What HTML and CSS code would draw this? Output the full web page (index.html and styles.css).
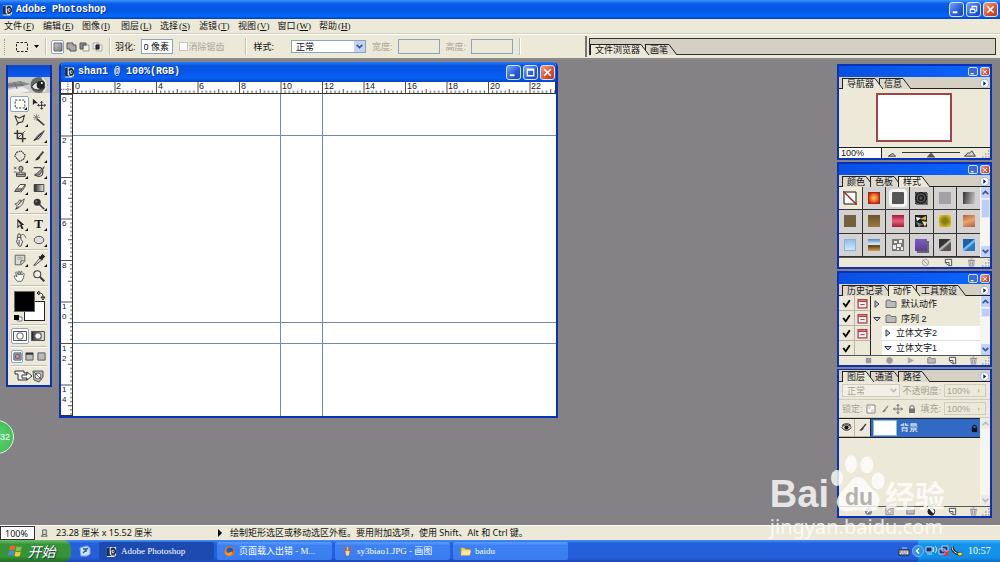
FILE: index.html
```html
<!DOCTYPE html>
<html lang="zh-CN">
<head>
<meta charset="utf-8">
<title>Adobe Photoshop</title>
<link rel="stylesheet" href="styles.css">
</head>
<body>
<svg class="defs" width="0" height="0" aria-hidden="true">
  <defs>
    <linearGradient id="gBlack" x1="0" x2="1"><stop offset="0" stop-color="#222"/><stop offset="1" stop-color="#eee"/></linearGradient>
    <linearGradient id="gGrey" x1="0" y1="0" x2="1" y2="1"><stop offset="0" stop-color="#ccc"/><stop offset="1" stop-color="#777"/></linearGradient>
    <pattern id="tickH" width="41.5" height="11" patternUnits="userSpaceOnUse"><path d="M.5 0V11M4.65 8.500V11M8.8 8.500V11M12.95 8.500V11M17.1 8.500V11M21.25 7V11M25.4 8.500V11M29.55 8.500V11M33.7 8.500V11M37.85 8.500V11" stroke="#222" stroke-width=".8"/></pattern>
    <pattern id="tickV" width="12" height="41.5" patternUnits="userSpaceOnUse"><path d="M0 .5H12M9 4.65H12M9 8.800H12M9 12.950H12M9 17.100H12M7 21.250H12M9 25.400H12M9 29.550H12M9 33.700H12M9 37.850H12" stroke="#222" stroke-width=".8"/></pattern>
  </defs>
  <symbol id="ps" viewBox="0 0 12 12"><path d="M1 1h10v9l-2 2H1z" fill="#dfe9f2"/><path d="M1 2l3-1v8l2 2H1z" fill="#16304f"/><path d="M5 3c3-3 6 0 6 3s-2 5-5 4z" fill="#1d2740"/><path d="M6 5c2-2 4 0 3 2s-3 1-3-2z" fill="#fff"/><circle cx="8" cy="6" r="1" fill="#247"/><path d="M7 9l3 2" stroke="#d44" stroke-width="1"/></symbol>
  <symbol id="min" viewBox="0 0 14 14"><path d="M3 10h5" stroke="#fff" stroke-width="2.200"/></symbol>
  <symbol id="max" viewBox="0 0 14 14"><path d="M3.500 3.500h7v7h-7zM3 4.500h8" fill="none" stroke="#fff" stroke-width="1.400"/></symbol>
  <symbol id="restore" viewBox="0 0 14 14"><path d="M5.500 6V3.500h5v5H9M5 4h6M3.500 6.500h5v4h-5zM3 7h6" fill="none" stroke="#fff" stroke-width="1.100"/></symbol>
  <symbol id="close" viewBox="0 0 14 14"><path d="M3.500 3.500l7 7m0-7l-7 7" stroke="#fff" stroke-width="1.800"/></symbol>
  <symbol id="slant" viewBox="0 0 9 11"><path d="M0 .5L8 11H0z" fill="currentColor"/><path d="M0 .5l8 10.500" fill="none" stroke="#222" stroke-width="1"/></symbol>
  <symbol id="play" viewBox="0 0 9 9"><circle cx="4.500" cy="4.500" r="4.200" fill="#f5f9ff" stroke="#8aa9e0" stroke-width=".8"/><path d="M3.300 2.200v4.600l2.900-2.300z" fill="#124"/></symbol>
  <symbol id="marquee" viewBox="0 0 16 16"><rect x="2.500" y="3.500" width="11" height="9" fill="none" stroke="#222" stroke-dasharray="2.500 1.500"/></symbol>
  <symbol id="trash" viewBox="0 0 10 10"><path d="M2 3h6l-.6 6H2.600zM1 2.500h8M4 1h2M4 4v4M6 4v4" fill="#ddd" stroke="#888" stroke-width=".9"/></symbol>
  <symbol id="page" viewBox="0 0 10 10"><path d="M1.500 1.500h7v7h-3l-4-3z" fill="#eee" stroke="#444"/><path d="M2 5h3.500v3" fill="#fff" stroke="#444"/></symbol>
  <symbol id="folder" viewBox="0 0 12 10"><path d="M1 8.500V2l1-1h3l1 1.500h5v6z" fill="#bbb" stroke="#666" stroke-width=".9"/></symbol>
  <symbol id="tick" viewBox="0 0 10 10"><path d="M2 4.500l2.300 3L8 2" fill="none" stroke="#000" stroke-width="1.700"/></symbol>
  <symbol id="dialog" viewBox="0 0 10 10"><rect x="1" y="1.500" width="8" height="7.500" fill="#fff" stroke="#b3404a" stroke-width="1.200"/><path d="M1 3h8" stroke="#b3404a" stroke-width="1.500"/><path d="M3 6h4" stroke="#b3404a"/></symbol>
  <symbol id="right" viewBox="0 0 8 8"><path d="M2 .8v6.400L6 4z" fill="#c7ceed" stroke="#223" stroke-width=".9"/></symbol>
  <symbol id="down" viewBox="0 0 8 8"><path d="M.8 2.500h6.400L4 6z" fill="#c7ceed" stroke="#223" stroke-width=".9"/></symbol>
  <symbol id="up-chev" viewBox="0 0 8 8"><path d="M1.500 5.500L4 3l2.500 2.500" fill="none" stroke="currentColor" stroke-width="1.500"/></symbol>
  <symbol id="down-chev" viewBox="0 0 8 8"><path d="M1.500 2.500L4 5l2.500-2.500" fill="none" stroke="currentColor" stroke-width="1.500"/></symbol>
  <symbol id="brush" viewBox="0 0 16 16"><path d="M13 3L8 9" stroke="#444" stroke-width="2"/><path d="M8.500 8l1 1.500C8 13 5 13 3 13c2-1 2-4 5.500-5z" fill="#333"/></symbol>
  <symbol id="grip" viewBox="0 0 9 9"><path d="M7 2h1.500M4 5h1.500M7 5h1.500M1 8h1.500M4 8h1.500M7 8h1.500" stroke="#aaa39a" stroke-width="1.500"/></symbol>
  <symbol id="lock" viewBox="0 0 10 10"><path d="M3 5V3.500a2 2 0 014 0V5" fill="none" stroke="currentColor" stroke-width="1.200"/><path d="M2 4.500h6V9H2z" fill="currentColor"/></symbol>
</svg>

<header class="titlebar">
  <svg class="app-icon"><use href="#ps"/></svg>
  <h1>Adobe Photoshop</h1>
  <div class="win-buttons">
    <button aria-label="最小化"><svg><use href="#min"/></svg></button>
    <button aria-label="还原"><svg><use href="#restore"/></svg></button>
    <button class="red" aria-label="关闭"><svg><use href="#close"/></svg></button>
  </div>
</header>

<nav class="menubar">
  <button>文件<i>(<u>F</u>)</i></button><button>编辑<i>(<u>E</u>)</i></button><button>图像<i>(<u>I</u>)</i></button><button>图层<i>(<u>L</u>)</i></button><button>选择<i>(<u>S</u>)</i></button><button>滤镜<i>(<u>T</u>)</i></button><button>视图<i>(<u>V</u>)</i></button><button>窗口<i>(<u>W</u>)</i></button><button>帮助<i>(<u>H</u>)</i></button>
</nav>

<section class="options">
  <span class="grip"></span>
  <button class="preset" aria-label="矩形选框工具"><svg class="i16"><use href="#marquee"/></svg><svg class="i5" viewBox="0 0 5 5"><path d="M0 1h5L2.500 4z"/></svg></button>
  <span class="vsep"></span>
  <div class="modes">
    <button class="on" aria-label="新选区"><svg viewBox="0 0 12 12"><path d="M2 2h8v8H2z" fill="url(#gGrey)" stroke="#666"/></svg></button>
    <button aria-label="添加到选区"><svg viewBox="0 0 12 12"><path d="M2 2h6v2h3v6H5V8H2z" fill="#aaa" stroke="#555"/></svg></button>
    <button aria-label="从选区减去"><svg viewBox="0 0 12 12"><path d="M5 4h6v6H5z" fill="#f3f0e6" stroke="#999"/><path d="M2 2h6v2H5v4H2z" fill="#888" stroke="#555"/></svg></button>
    <button aria-label="与选区交叉"><svg viewBox="0 0 12 12"><path d="M2 2h6v6H2zM5 4h6v6H5z" fill="#eee" stroke="#aaa"/><path d="M5 4h3v4H5z" fill="#333" stroke="#222"/></svg></button>
  </div>
  <span class="vsep"></span>
  <label class="feather">羽化: <input type="text" value="0 像素"></label>
  <label class="alias"><input type="checkbox" disabled>消除锯齿</label>
  <span class="vsep far"></span>
  <label class="style-field">样式: <span class="select"><select><option>正常</option></select><svg viewBox="0 0 8 8"><use href="#down-chev"/></svg></span></label>
  <label class="dim">宽度: <input type="text" disabled></label>
  <label class="dim">高度: <input type="text" disabled></label>
  <span class="vsep"></span>
  <div class="well">
    <div class="tabs">
      <button class="tab on"><span>文件浏览器</span><svg><use href="#slant"/></svg></button>
      <button class="tab"><span>画笔</span><svg><use href="#slant"/></svg></button>
    </div>
  </div>
</section>

<main class="workspace">
  <aside class="toolbox">
    <div class="tool-title"></div>
    <svg class="eye" viewBox="0 0 41 16" preserveAspectRatio="none"><rect width="41" height="16" fill="#c9cac8"/><path d="M0 6l12-2 10 3-8 2-14 2z" fill="#8d8e8e"/><path d="M0 13l14-3 8 4-10 2H0z" fill="#eee"/><path d="M0 8h16M6 5l3 7M12 4l2 5" stroke="#666" stroke-width=".8"/><circle cx="30" cy="8" r="8" fill="#66686a"/><path d="M23 10c3-6 11-7 15-2-3 5-11 7-15 2z" fill="#e4e4e3" stroke="#333"/><path d="M33 1c5 3 6 10 1 14" fill="none" stroke="#eee" stroke-width="1.500"/><circle cx="32" cy="8" r="4" fill="#222"/><circle cx="33" cy="6" r="1" fill="#fff"/></svg>
    <div class="tools">
      <button class="on" aria-label="选框"><svg viewBox="0 0 16 16"><use href="#marquee"/></svg></button>
      <button aria-label="移动" class="plain"><svg viewBox="0 0 16 16"><path d="M1 2v7l2-2h4z" fill="#222"/><path d="M11 5v9M6.500 9.500h9M9.500 6.500L11 5l1.500 1.500M9.500 12.500L11 14l1.500-1.500M8 8L6.500 9.500 8 11M14 8l1.500 1.500L14 11" fill="none" stroke="#222"/></svg></button>
      <button aria-label="套索"><svg viewBox="0 0 16 16"><path d="M2 3l5 3 6-3-2 7-5 1-2 3M2 3l3 7 2 2" fill="none" stroke="#333" stroke-width="1.200"/></svg></button>
      <button aria-label="魔棒" class="plain"><svg viewBox="0 0 16 16"><path d="M6 7l8 7" stroke="#333" stroke-width="1.800"/><path d="M5 1v8M1 5h8M2 2l6 6M8 2L2 8" stroke="#666" stroke-width=".8"/></svg></button>
      <button aria-label="裁切" class="plain"><svg viewBox="0 0 16 16"><path d="M5 1v10h10M1 5h10v10" fill="none" stroke="#333" stroke-width="1.700"/><path d="M14 2L5 11" stroke="#555"/></svg></button>
      <button aria-label="切片"><svg viewBox="0 0 16 16"><path d="M14 2L7 7l-5 6 6-2 3-4z" fill="#aaa" stroke="#333"/><path d="M3 13l8-8" stroke="#222"/></svg></button>
      <hr>
      <button aria-label="修复"><svg viewBox="0 0 16 16"><path d="M4 4l5-2 5 5-2 5-5 2-5-6z" fill="#e9e6dc" stroke="#333" stroke-width="1.200" stroke-dasharray="2 .7"/></svg></button>
      <button aria-label="画笔"><svg viewBox="0 0 16 16"><use href="#brush"/></svg></button>
      <button aria-label="图章"><svg viewBox="0 0 16 16"><circle cx="9" cy="4" r="2.500" fill="#aaa" stroke="#333"/><path d="M8 6v3H4v4h10V9h-4V6M4 11h10" fill="#ccc" stroke="#333"/><path d="M1 2l3 3M4 2L1 5M1 8h3" stroke="#555"/></svg></button>
      <button aria-label="历史画笔"><svg viewBox="0 0 16 16"><path d="M2 3h8c4 3 3 10-2 10-4 0-5-2-4-3" fill="none" stroke="#444" stroke-width="1.300"/><path d="M14 2L7 8l-4 4 6-1 2-3z" fill="#999" stroke="#333" stroke-width=".8"/></svg></button>
      <button aria-label="橡皮擦"><svg viewBox="0 0 16 16"><path d="M8 4h6l-6 8H2z" fill="#eee" stroke="#333"/><path d="M2 12l2-3h6l-2 3zM14 4v2l-5 7" fill="#999" stroke="#444"/></svg></button>
      <button aria-label="渐变"><svg viewBox="0 0 16 16"><path d="M2.500 4h11v8h-11z" fill="url(#gBlack)" stroke="#333"/></svg></button>
      <button aria-label="涂抹"><svg viewBox="0 0 16 16"><path d="M13 2l-2 6-4 4-4 2 2-4-3-2 3-1 3-4 1 2z" fill="#ddd" stroke="#555"/><path d="M6 9l4-5M3 14l4-3" stroke="#333"/></svg></button>
      <button aria-label="减淡"><svg viewBox="0 0 16 16"><circle cx="6" cy="6" r="4" fill="#333"/><path d="M8 8l6 6" stroke="#444" stroke-width="1.800"/><circle cx="5" cy="5" r="1" fill="#999"/></svg></button>
      <hr>
      <button aria-label="路径选择"><svg viewBox="0 0 16 16"><path d="M5 2v11l3-3 2 4 2-1-2-4h3z" fill="#222"/><path d="M6 5v5l3-1z" fill="#ddd"/></svg></button>
      <button aria-label="文字" class="type">T</button>
      <button aria-label="钢笔"><svg viewBox="0 0 16 16"><path d="M5 5h4v2l2 3-2 5H7L4 10l1-3zM7 8v5M5 5l1-4h2l1 4" fill="#eee" stroke="#333"/><path d="M9 3c4-4 5 2 6 3" fill="none" stroke="#555"/></svg></button>
      <button aria-label="椭圆"><svg viewBox="0 0 16 16"><ellipse cx="8" cy="8" rx="5.500" ry="4.200" fill="#ddd" stroke="#444"/></svg></button>
      <hr>
      <button aria-label="注释"><svg viewBox="0 0 16 16"><path d="M2.500 2.500h11v7l-4 4h-7zM13 9H9v4" fill="#d9d9d5" stroke="#555"/><path d="M5 5h6M5 7h6" stroke="#999"/></svg></button>
      <button aria-label="吸管"><svg viewBox="0 0 16 16"><path d="M9 6l-7 8 1 .5 8-6.500" fill="#eee" stroke="#333"/><path d="M8 4l4 4M9 6l3-4 2 2-3 3z" fill="#222" stroke="#222" stroke-width="1.500"/></svg></button>
      <button aria-label="抓手" class="plain"><svg viewBox="0 0 16 16"><path d="M5 14C3 12 1 9 1.500 8s2 0 3 1L3 4c1-1.500 2 0 3 3V3c1-2 2 0 2 4l1-4c2-1 1 1 1 4l2-2c2 0 0 2 0 5l-2 4z" fill="#fff" stroke="#444" stroke-width=".9"/></svg></button>
      <button aria-label="缩放" class="plain"><svg viewBox="0 0 16 16"><circle cx="6" cy="6" r="4" fill="#eee" stroke="#444" stroke-width="1.200"/><path d="M9 9l5 5" stroke="#333" stroke-width="2.200"/></svg></button>
      <hr>
    </div>
    <svg class="colors" viewBox="0 0 38 36"><rect x="14.500" y="13.500" width="20" height="19" fill="#fff" stroke="#222"/><rect x="4.500" y="3.500" width="20" height="20" fill="#000" stroke="#666"/><path d="M29 5c4 0 4 2 4 5M29 3v4l-2-2zM31 9h4l-2 3z" fill="none" stroke="#222"/><path d="M7 29h5v4H7z" fill="#fff" stroke="#777"/><path d="M4 27h5v5H4z"/></svg>
    <hr>
    <div class="row two">
      <button class="on" aria-label="标准模式"><svg viewBox="0 0 16 14"><path d="M1.500 2.500h13v9h-13z" fill="#fff" stroke="#555"/><circle cx="8" cy="7" r="3.300" fill="#fff" stroke="#666"/></svg></button>
      <button aria-label="快速蒙版"><svg viewBox="0 0 16 14"><path d="M1.500 2.500h13v9h-13z" fill="url(#gBlack)" stroke="#555"/><circle cx="8" cy="7" r="3.300" fill="#fff" stroke="#444"/></svg></button>
    </div>
    <hr>
    <div class="row three">
      <button class="on" aria-label="标准屏幕"><svg viewBox="0 0 10 10"><path d="M1 1h8v8H1z" fill="#9eb7da" stroke="#456"/><path d="M3 3h4v4H3z" fill="#d9a0a0" stroke="#744"/></svg></button>
      <button aria-label="带菜单全屏"><svg viewBox="0 0 10 10"><path d="M1 1h8v8H1z" fill="#bbb" stroke="#555"/><path d="M1 2h8" stroke="#333" stroke-width="2"/></svg></button>
      <button aria-label="全屏"><svg viewBox="0 0 10 10"><path d="M1 1h8v8H1z" fill="#bbb" stroke="#555"/></svg></button>
    </div>
    <hr>
    <div class="row two last">
      <button class="wide" aria-label="转到 ImageReady"><svg viewBox="0 0 32 14"><path d="M2 2h9v2h3v7H5V5H2z" fill="#eee" stroke="#333"/><path d="M9 6h5V3l5 4-5 4V9H9z" fill="#fff" stroke="#333"/><path d="M20 2h10v6l-4 5-5-2z" fill="#bbb" stroke="#555"/><circle cx="25" cy="7" r="3" fill="#eee" stroke="#666"/><path d="M21 3l8 8" stroke="#666"/></svg></button>
    </div>
  </aside>

  <section class="document">
    <div class="doc-title">
      <svg class="doc-icon"><use href="#ps"/></svg>
      <h2>shan1 @ 100%(RGB)</h2>
      <div class="win-buttons">
        <button aria-label="最小化"><svg><use href="#min"/></svg></button>
        <button aria-label="最大化"><svg><use href="#max"/></svg></button>
        <button class="red" aria-label="关闭"><svg><use href="#close"/></svg></button>
      </div>
    </div>
    <div class="doc-body">
      <svg class="corner" viewBox="0 0 12 11"><path d="M7.500 0v11M0 7.500h12" stroke="#333" stroke-dasharray="1 1"/></svg>
      <svg class="ruler"><rect width="100%" height="100%" fill="url(#tickH)"/>
        <g><text x="2" y="7">0</text><text x="43" y="7">2</text><text x="85" y="7">4</text><text x="126" y="7">6</text><text x="168" y="7">8</text><text x="209" y="7">10</text><text x="251" y="7">12</text><text x="292" y="7">14</text><text x="334" y="7">16</text><text x="375" y="7">18</text><text x="417" y="7">20</text><text x="458" y="7">22</text></g></svg>
      <svg class="ruler side"><rect width="100%" height="100%" fill="url(#tickV)"/>
        <g><text x="1" y="8">0</text><text x="1" y="49">2</text><text x="1" y="91">4</text><text x="1" y="132">6</text><text x="1" y="174">8</text><text x="1" y="215">1</text><text x="1" y="225">0</text><text x="1" y="257">1</text><text x="1" y="267">2</text><text x="1" y="298">1</text><text x="1" y="308">4</text></g></svg>
      <svg class="canvas"><path d="M207.500 0V1000M249.500 0V1000M0 41.500H2000M0 228.500H2000M0 249.500H2000" stroke="#6a8db0"/></svg>
    </div>
  </section>

  <aside class="dock">
    <section class="panel navigator">
      <div class="panel-title"><button aria-label="最小化"><svg><use href="#min"/></svg></button><button class="red" aria-label="关闭"><svg><use href="#close"/></svg></button></div>
      <div class="tabs"><button class="tab on"><span>导航器</span><svg><use href="#slant"/></svg></button><button class="tab"><span>信息</span><svg><use href="#slant"/></svg></button><button class="flyout" aria-label="菜单"><svg><use href="#play"/></svg></button></div>
      <div class="nav-view"><div class="thumb"></div></div>
      <div class="nav-foot"><input type="text" value="100%" aria-label="缩放比例"><button aria-label="缩小"><svg viewBox="0 0 12 10"><path d="M2 8h8L7 5 5 6z" fill="#ccc" stroke="#333"/></svg></button><input type="range" aria-label="缩放"><button aria-label="放大"><svg viewBox="0 0 14 10"><path d="M1 8h12L9 2 6 5 5 4z" fill="#ccc" stroke="#333"/></svg></button><svg class="size"><use href="#grip"/></svg></div>
    </section>

    <section class="panel styles">
      <div class="panel-title"><button aria-label="最小化"><svg><use href="#min"/></svg></button><button class="red" aria-label="关闭"><svg><use href="#close"/></svg></button></div>
      <div class="tabs"><button class="tab"><span>颜色</span><svg><use href="#slant"/></svg></button><button class="tab"><span>色板</span><svg><use href="#slant"/></svg></button><button class="tab on"><span>样式</span><svg><use href="#slant"/></svg></button><button class="flyout" aria-label="菜单"><svg><use href="#play"/></svg></button></div>
      <div class="with-scroll">
        <div class="swatches">
          <button class="none" aria-label="无样式"><svg viewBox="0 0 14 14"><path d="M1 1h12v12H1z" fill="#fff" stroke="#111"/><path d="M0 0l14 14" stroke="#a22" stroke-width="1.400"/></svg></button>
          <button aria-label="样式 1"><i class="s-red"></i></button><button aria-label="样式 2"><i class="s-dark"></i></button><button aria-label="样式 3"><i class="s-ring"></i></button><button aria-label="样式 4"><i class="s-grey"></i></button><button aria-label="样式 5"><i class="s-fade"></i></button>
          <button aria-label="样式 6"><i class="s-olive"></i></button><button aria-label="样式 7"><i class="s-gold"></i></button><button aria-label="样式 8"><i class="s-pink"></i></button><button aria-label="样式 9"><svg viewBox="0 0 12 12"><path d="M0 0h12v12H0z" fill="#222"/><path d="M1 2l5 1-4 3z" fill="#fff"/><path d="M5 4l6-3v4z" fill="#e5b72f"/><path d="M1 7l6 2-3 3z" fill="#34a0a4"/><path d="M7 6l5 1-2 5z" fill="#e8dfb0"/><path d="M4 9l4 1" stroke="#e33"/></svg></button><button aria-label="样式 10"><i class="s-yellow"></i></button><button aria-label="样式 11"><i class="s-copper"></i></button>
          <button aria-label="样式 12"><i class="s-sky"></i></button><button aria-label="样式 13"><i class="s-chrome"></i></button><button aria-label="样式 14"><svg viewBox="0 0 12 12"><path d="M0 0h12v12H0z" fill="#777"/><path d="M2 2h3v2H2zM7 1h3v3H7zM1 6h3v4H1zM5 5h4v3H5zM9 8h2v3H9zM5 9h2v2H5z" fill="#eee"/></svg></button><button aria-label="样式 15"><i class="s-purple"></i></button><button aria-label="样式 16"><i class="s-steel"></i></button><button aria-label="样式 17"><i class="s-blue"></i></button>
        </div>
        <div class="scroll"><svg><use href="#up-chev"/></svg><b class="long"></b><svg class="end"><use href="#down-chev"/></svg></div>
      </div>
      <div class="foot"><button aria-label="清除样式"><svg viewBox="0 0 10 10"><circle cx="5" cy="5" r="3.500" fill="none" stroke="#999"/><path d="M2.500 2.500l5 5" stroke="#999"/></svg></button><button aria-label="新建"><svg><use href="#page"/></svg></button><button aria-label="删除"><svg><use href="#trash"/></svg></button><svg class="size"><use href="#grip"/></svg></div>
    </section>

    <section class="panel actions">
      <div class="panel-title"><button aria-label="最小化"><svg><use href="#min"/></svg></button><button class="red" aria-label="关闭"><svg><use href="#close"/></svg></button></div>
      <div class="tabs"><button class="tab"><span>历史记录</span><svg><use href="#slant"/></svg></button><button class="tab on"><span>动作</span><svg><use href="#slant"/></svg></button><button class="tab"><span>工具预设</span><svg><use href="#slant"/></svg></button><button class="flyout" aria-label="菜单"><svg><use href="#play"/></svg></button></div>
      <div class="with-scroll">
        <ul class="action-list">
          <li><span class="cell"><svg><use href="#tick"/></svg></span><span class="cell"><svg><use href="#dialog"/></svg></span><span class="entry"><svg class="i8"><use href="#right"/></svg><svg class="fold"><use href="#folder"/></svg>默认动作</span></li>
          <li><span class="cell"><svg><use href="#tick"/></svg></span><span class="cell"><svg><use href="#dialog"/></svg></span><span class="entry"><svg class="i8"><use href="#down"/></svg><svg class="fold"><use href="#folder"/></svg>序列 2</span></li>
          <li><span class="cell"><svg><use href="#tick"/></svg></span><span class="cell"><svg><use href="#dialog"/></svg></span><span class="entry child"><svg class="i8"><use href="#right"/></svg>立体文字2</span></li>
          <li><span class="cell"><svg><use href="#tick"/></svg></span><span class="cell"></span><span class="entry child"><svg class="i8"><use href="#down"/></svg>立体文字1</span></li>
        </ul>
        <div class="scroll"><svg><use href="#up-chev"/></svg><b></b><svg class="end"><use href="#down-chev"/></svg></div>
      </div>
      <div class="foot wide"><button aria-label="停止"><svg viewBox="0 0 10 10"><path d="M2 2h6v6H2z" fill="#999"/></svg></button><button aria-label="记录"><svg viewBox="0 0 10 10"><circle cx="5" cy="5" r="3.500" fill="#999"/></svg></button><button aria-label="播放"><svg viewBox="0 0 10 10"><path d="M2 1.500l7 3.500-7 3.500z" fill="#aaa"/></svg></button><button aria-label="新序列"><svg><use href="#folder"/></svg></button><button aria-label="新动作"><svg><use href="#page"/></svg></button><button aria-label="删除"><svg><use href="#trash"/></svg></button><svg class="size"><use href="#grip"/></svg></div>
    </section>

    <section class="panel layers">
      <div class="tabs"><button class="tab on"><span>图层</span><svg><use href="#slant"/></svg></button><button class="tab"><span>通道</span><svg><use href="#slant"/></svg></button><button class="tab"><span>路径</span><svg><use href="#slant"/></svg></button><button class="flyout" aria-label="菜单"><svg><use href="#play"/></svg></button></div>
      <div class="layer-opts">
        <span class="select"><select disabled aria-label="混合模式"><option>正常</option></select><svg viewBox="0 0 8 8"><use href="#down-chev"/></svg></span>
        <label>不透明度: <span class="pct"><input type="text" value="100%" disabled><svg viewBox="0 0 5 8"><path d="M1 2v4l2-2z" fill="#bbb"/></svg></span></label>
      </div>
      <div class="layer-opts">
        <span>锁定:</span>
        <button disabled aria-label="锁定透明"><svg viewBox="0 0 10 10"><path d="M1 1h8v8H1z" fill="#fff" stroke="#888"/><path d="M2 2h3v3H2zM5 5h3v3H5z" fill="#ddd"/></svg></button>
        <button disabled aria-label="锁定像素"><svg viewBox="0 0 16 16"><use href="#brush" opacity=".6"/></svg></button>
        <button disabled aria-label="锁定位置"><svg viewBox="0 0 10 10"><path d="M5 0v10M0 5h10M3.500 2L5 .5 6.500 2M3.500 8L5 9.500 6.500 8M2 3.500L.5 5 2 6.500M8 3.500L9.500 5 8 6.500" fill="none" stroke="#777"/></svg></button>
        <button disabled aria-label="锁定全部"><svg><use href="#lock"/></svg></button>
        <label>填充: <span class="pct"><input type="text" value="100%" disabled><svg viewBox="0 0 5 8"><path d="M1 2v4l2-2z" fill="#bbb"/></svg></span></label>
      </div>
      <div class="with-scroll">
        <div class="layer-list">
          <div class="layer">
            <span class="cell"><svg viewBox="0 0 12 10"><path d="M1 5c2-4 8-4 10 0-2 4-8 4-10 0z" fill="#ddd" stroke="#222"/><circle cx="6" cy="5" r="2.300" fill="#111"/><path d="M1 3c3-3 7-3 10 0" fill="none" stroke="#222"/></svg></span>
            <span class="cell"><svg viewBox="0 0 16 16"><use href="#brush"/></svg></span>
            <span class="layer-name"><i></i>背景<svg><use href="#lock"/></svg></span>
          </div>
        </div>
        <div class="scroll off"><svg><use href="#up-chev"/></svg><svg class="end"><use href="#down-chev"/></svg></div>
      </div>
      <div class="foot wide"><button aria-label="图层样式"><svg viewBox="0 0 10 10"><circle cx="5" cy="5" r="4" fill="#888"/><path d="M3 7l4-4" stroke="#fff"/></svg></button><button aria-label="蒙版"><svg viewBox="0 0 10 10"><path d="M1 1.500h8v7H1z" fill="#ddd" stroke="#888"/><circle cx="5" cy="5" r="2" fill="#fff" stroke="#888"/></svg></button><button aria-label="新图层组"><svg><use href="#folder"/></svg></button><button aria-label="调整图层"><svg viewBox="0 0 10 10"><circle cx="5" cy="5" r="3.700" fill="#fff" stroke="#222"/><path d="M2 8a4 4 0 010-6l6 6c-1 2-4 2-6 0z" fill="#222"/></svg></button><button aria-label="新图层"><svg><use href="#page"/></svg></button><button aria-label="删除"><svg><use href="#trash"/></svg></button><svg class="size"><use href="#grip"/></svg></div>
    </section>
  </aside>

  <div class="bubble">32</div>
</main>

<footer class="status">
  <input type="text" value="100%" aria-label="显示比例">
  <svg class="doc-size" viewBox="0 0 10 10"><path d="M3 1h4v5H3zM1 8h7M3 6L2 8M7 6l1 2" fill="#ddd" stroke="#555"/></svg>
  <span class="measure">23.28 厘米 x 15.52 厘米</span>
  <svg class="i8" viewBox="0 0 8 8"><path d="M2 0v8l4-4z"/></svg>
  <span>绘制矩形选区或移动选区外框。要用附加选项，使用 Shift、Alt 和 Ctrl 键。</span>
</footer>

<nav class="taskbar">
  <button class="start"><svg viewBox="0 0 14 13"><path d="M2 2c2-1 3-1 5 0L6 6C4 5 3 5 1 6z" fill="#f0642f"/><path d="M8 2c2 1 3 1 5 0l-1 4c-2 1-3 1-5 0z" fill="#8ac43f"/><path d="M1 7c2-1 3-1 5 0l-1 4c-2-1-3-1-5 0z" fill="#3f8ff0"/><path d="M7 7c2 1 3 1 5 0l-1 4c-2 1-3 1-5 0z" fill="#fbc72e"/></svg>开始</button>
  <button class="quick" aria-label="显示桌面"><svg viewBox="0 0 12 12"><path d="M1 3l7-2 3 2v6l-3 2H2z" fill="#cfe3fa" stroke="#7fa9e5"/><path d="M4 8l5-5M4 4h3v3" fill="none" stroke="#2858a8" stroke-width="1.300"/></svg></button>
  <div class="tasks">
    <button class="active"><svg><use href="#ps"/></svg>Adobe Photoshop</button>
    <button><svg viewBox="0 0 12 12"><circle cx="6" cy="6" r="5.500" fill="#e8701c"/><circle cx="6.500" cy="5" r="3.500" fill="#2e57a7"/><path d="M1 3c0 5 3 5 5 4l3-1c1 4-5 7-8 2z" fill="#f29a26"/></svg>页面载入出错 - M...</button>
    <button><svg viewBox="0 0 12 12"><path d="M3 5h6l-1 6H4z" fill="#e8dcc0" stroke="#765"/><path d="M4 5L2 1M6 5V1M8 5l2-4" stroke="#d85a2a" stroke-width="1.500"/><path d="M6 5V1" stroke="#efc63d" stroke-width="1.500"/></svg>sy3biao1.JPG - 画图</button>
    <button><svg viewBox="0 0 12 12"><path d="M1 10V2h4l1 1.500h5V10z" fill="#f3cf58" stroke="#b98d20" stroke-width=".7"/><path d="M1 10l1.500-5H12l-1.500 5z" fill="#fdeb9b"/></svg>baidu</button>
  </div>
  <svg class="ime" viewBox="0 0 12 12"><path d="M1 5h10v5H1z" fill="#eee" stroke="#222"/><path d="M2 7h8M3 9h6" stroke="#444" stroke-dasharray="1 .6"/><path d="M4 3h5" stroke="#ccd"/></svg>
  <div class="tray">
    <button class="chev" aria-label="显示图标"><svg viewBox="0 0 12 12"><circle cx="6" cy="6" r="5.500" fill="#2f8fe8" stroke="#9fd2ff" stroke-width=".7"/><path d="M7 3.500L4.500 6 7 8.500" fill="none" stroke="#fff" stroke-width="1.500"/></svg></button>
    <svg viewBox="0 0 12 12"><path d="M1 2h6v5H1zM2 9h5" fill="#16306b" stroke="#cde" stroke-width=".9"/><path d="M8 2c1 1 1 4 0 5M10 1c2 2 2 5 0 7" fill="none" stroke="#dff"/></svg>
    <svg viewBox="0 0 12 12"><path d="M4 1h6v5H4zM1 4h6v5H1z" fill="#1b3a86" stroke="#cde" stroke-width=".9"/><path d="M6 6l5 5m0-5l-5 5" stroke="#e33" stroke-width="1.700"/></svg>
    <svg viewBox="0 0 12 12"><path d="M1 1c0 5 3 7 7 8" fill="none" stroke="#222" stroke-width="3"/><path d="M1 1c0 5 3 7 7 8" fill="none" stroke="#eee"/><path d="M6 8l4-1 2 3-4 1z" fill="#f1e13c" stroke="#333" stroke-width=".6"/></svg>
    <time>10:57</time>
  </div>
</nav>

<div class="watermark" aria-label="Baidu 经验">
  <div class="mark"><span class="bai">Bai</span><svg viewBox="0 0 54 58"><g fill="#fff"><ellipse cx="6" cy="23" rx="6" ry="8"/><ellipse cx="20" cy="9" rx="6" ry="9"/><ellipse cx="36" cy="10" rx="6.500" ry="8.500"/><ellipse cx="47" cy="26" rx="6.500" ry="8.500"/><path d="M27 22c7 0 8 7 14 12 6 4 9 9 7 15-2 8-9 8-14 7-5-1-9-1-14 0-6 1-12 0-14-7-1-6 3-11 7-15 6-5 7-12 14-12z"/></g><text x="28" y="50" text-anchor="middle">du</text></svg><span class="jy">经验</span></div>
  <div class="url">jingyan.baidu.com</div>
</div>
</body>
</html>
```
FILE: styles.css
```css
* { box-sizing: border-box; }
html, body { height: 100%; }
body {
  margin: 0;
  display: flex;
  flex-direction: column;
  overflow: hidden;
  position: relative;
  background: #848284;
  color: #111;
  font: 9px/12px "Liberation Sans", "Noto Sans CJK SC", sans-serif;
}
button, input, select { font: inherit; color: inherit; margin: 0; padding: 0; border: 0; background: none; border-radius: 0; min-width: 0; }
button { display: flex; align-items: center; justify-content: center; white-space: nowrap; }
input, select { outline: 0; }
svg { display: block; flex: none; }
hr { margin: 0; border: 0; border-top: 1px solid #c4c0b2; border-bottom: 1px solid #fbfaf3; }
h1, h2 { margin: 0; font: bold 10px/14px "Liberation Mono", monospace; color: #fff; text-shadow: 1px 1px 0 #0a2d8c; }
.defs { position: absolute; }
.i16 { width: 16px; height: 16px; }
.i8 { width: 8px; height: 8px; }
.i5 { width: 5px; height: 5px; }

.titlebar {
  display: flex; align-items: center; gap: 3px; height: 19px; flex: none; padding: 0 2px;
  background: linear-gradient(#3a95ff, #0a5be8 20%, #0458e6 55%, #0268ff 85%, #0340b8);
}
.titlebar h1 { flex: 1; }
.app-icon { width: 11px; height: 12px; }
.win-buttons { display: flex; gap: 2px; }
.win-buttons button { width: 15px; height: 15px; border: 1px solid #d5e3ff; border-radius: 3px; background: linear-gradient(135deg, #7aa5f5, #2459d8 60%, #1c48b8); }
.win-buttons button.red, .panel-title .red { background: linear-gradient(135deg, #f0a080, #d9502c 60%, #b83a1c); }
.win-buttons svg { width: 13px; height: 13px; }

.menubar { display: flex; gap: 8px; flex: none; height: 15px; padding: 0 4px; background: #ece9d8; border-bottom: 1px solid #d4d1c2; }
.menubar button { min-width: 31px; justify-content: flex-start; }
.menubar i { font: 9px/12px "Liberation Serif", serif; margin-left: 1px; }

.options { display: flex; align-items: center; flex: none; height: 26px; padding-right: 4px; background: #ece9d8; border-top: 1px solid #fff; border-bottom: 2px solid #8b8984; }
.grip { width: 2px; height: 16px; margin: 0 8px 0 4px; border-left: 1px dotted #99958a; }
.preset { gap: 4px; }
.vsep { width: 2px; height: 17px; margin: 0 4px 0 6px; border-left: 1px solid #c4c0b2; border-right: 1px solid #fff; }
.vsep.far { margin: 0 7px 0 20px; }
.modes { display: flex; }
.modes button { width: 13px; height: 14px; border-radius: 2px; }
.modes svg { width: 12px; height: 12px; }
.modes .on { border: 1px solid #92a5bd; background: #fff; }
.options label { display: flex; align-items: center; gap: 5px; }
.feather input, .dim input { border: 1px solid #8ba3bb; height: 15px; background: #fff; }
.feather input { width: 32px; padding-left: 2px; font-size: 9px; }
.dim { color: #aaa697; margin-left: 6px; }
.dim input { width: 42px; background: #ece9d8; }
.options .alias { color: #aaa697; gap: 1px; margin-left: 6px; }
.alias input { appearance: none; width: 9px; height: 9px; border: 1px solid #c8c5b8; background: #fff; }
.options .style-field { gap: 17px; }
.select { position: relative; display: flex; align-items: center; width: 75px; height: 13px; border: 1px solid #8ba3bb; background: #fff; }
.select select { appearance: none; width: 100%; height: 100%; padding-left: 4px; opacity: 1; }
.select svg { position: absolute; right: 0; width: 11px; height: 11px; padding: 1px; background: #c3d3fb; color: #3a568c; pointer-events: none; }
.well { flex: 1; display: flex; align-items: flex-end; height: 21px; margin-left: 60px; padding: 2px 0 2px 2px; border-left: 2px solid #77756f; }
.well .tabs { flex: 1; height: 17px; padding: 5px 0 0; border: 1px solid #333; }

.tabs { display: flex; height: 12px; flex: none; padding: 1px 0 0 3px; background: #d5d0c3; border-bottom: 1px solid #222; align-items: stretch; }
.tab { position: relative; height: 11px; color: #111; }
.tab + .tab { margin-left: -5px; }
.tab span { height: 11px; padding: 0 1px 0 4px; border-top: 1px solid #222; border-left: 1px solid #222; background: #ddd9cd; line-height: 11px; }
.tab svg { width: 9px; height: 11px; color: #ddd9cd; }
.tab.on { z-index: 1; }
.tab.on span { background: #ece9d8; }
.tab.on svg { color: #ece9d8; }
.flyout { margin-left: auto; padding-right: 1px; }
.flyout svg { width: 9px; height: 9px; }

.workspace { position: relative; flex: 1; min-height: 0; background: #848284; }

.toolbox { position: absolute; left: 6px; top: 5px; width: 46px; display: flex; flex-direction: column; border: 2px solid #0a32b8; border-top: 0; background: #ece9d8; }
.tool-title { height: 12px; background: linear-gradient(#0a46c8, #0a5cf4); }
.eye { width: 100%; height: 16px; }
.tools { display: grid; grid-template-columns: 1fr 1fr; grid-auto-rows: auto; padding: 3px 2px 0; }
.tools hr { grid-column: 1 / -1; margin: 1px 0; }
.tools button { position: relative; height: 16px; }
.tools svg { width: 14px; height: 14px; }
.tools button:not(.plain)::after { content: ""; position: absolute; right: 1px; bottom: 1px; width: 3px; height: 3px; background: #111; clip-path: polygon(100% 0, 100% 100%, 0 100%); }
.tools .on, .row .on { border: 1px solid #92a5bd; border-radius: 2px; background: #fff; }
.tools .type { font: bold 13px/14px "Liberation Serif", serif; }
.colors { width: 38px; height: 36px; margin-left: 2px; }
.toolbox > hr { margin: 0 3px; }
.row { display: flex; justify-content: space-around; align-items: center; padding: 2px 3px; }
.row.last { padding: 1px 3px; }
.two button { width: 18px; height: 16px; }
.two svg { width: 16px; height: 14px; }
.two .wide, .two .wide svg { width: 34px; }
.three button { width: 12px; height: 13px; }
.three svg { width: 9px; height: 9px; }

.document { position: absolute; left: 59px; top: 2px; width: 499px; height: 356px; display: flex; flex-direction: column; border: 2px solid #0a32b8; border-top: 0; border-radius: 5px 5px 0 0; overflow: hidden; background: #fff; }
.doc-title { display: flex; align-items: center; gap: 3px; height: 20px; padding: 0 1px 0 3px; background: linear-gradient(#2a7cf5, #0752dd 20%, #0660f8 80%, #0343c0); }
.doc-title h2 { flex: 1; }
.doc-icon { width: 11px; height: 12px; }
.doc-body { flex: 1; display: grid; grid-template-columns: 12px 1fr; grid-template-rows: 12px 1fr; min-height: 0; }
.doc-body > svg { width: 100%; height: 100%; min-height: 0; }
.corner, .ruler { background: #fff; }
.corner, .ruler { border-bottom: 1px solid #333; border-right: 1px solid #333; }
.ruler text { font: 9px "Liberation Sans", sans-serif; fill: #222; }
.ruler.side text { font-size: 8px; }

.dock { position: absolute; right: 8px; top: 4px; width: 155px; display: flex; flex-direction: column; gap: 2px; }
.panel { display: flex; flex-direction: column; border: 2px solid #0a32b8; background: #ece9d8; }
.panel-title { display: flex; justify-content: flex-end; align-items: center; gap: 2px; height: 11px; flex: none; background: linear-gradient(90deg, #0a50e0, #0a66ff); }
.panel-title button { width: 10px; height: 9px; border: 1px solid #cfdcf8; border-radius: 2px; background: #3a68d8; }
.panel-title svg { width: 8px; height: 8px; }
.navigator { height: 96px; }
.nav-view { flex: 1; display: flex; justify-content: center; padding: 4px 2px 5px 0; }
.thumb { width: 76px; border: 2px solid #a04448; background: #fff; }
.nav-foot { display: flex; align-items: center; height: 11px; border-top: 1px solid #222; }
.nav-foot input[type=text] { width: 43px; height: 10px; padding-left: 2px; background: #fff; border-right: 1px solid #222; font-size: 9px; }
.nav-foot button { width: 20px; height: 10px; }
.nav-foot button svg { height: 9px; width: 14px; }
.nav-foot input[type=range] { appearance: none; flex: 1; height: 9px; background: linear-gradient(#333, #333) 0 3px / 100% 1px no-repeat; }
.nav-foot input[type=range]::-webkit-slider-thumb { appearance: none; width: 9px; height: 5px; margin-top: 4px; background: #555; clip-path: polygon(50% 0, 100% 100%, 0 100%); }
.size { width: 9px; height: 9px; margin-left: 1px; }

.styles { height: 107px; }
.with-scroll { flex: 1; display: flex; min-height: 0; }
.swatches { flex: 1; display: grid; grid-template: repeat(3, 1fr) / repeat(6, 1fr); gap: 1px; background: #333; border-bottom: 1px solid #333; }
.swatches button { background: #d4d2d0; }
.swatches .none { background: #ece9d8; }
.swatches svg { width: 14px; height: 14px; }
.swatches button:not(.none) svg { width: 12px; height: 12px; }
.swatches i { width: 12px; height: 12px; flex: none; }
.s-red { background: radial-gradient(#ffd84a, #f0521c 60%, #a81810); border: 1px solid #9c2a1c; }
.swatches .s-dark { width: 18px; height: 18px; background: #555; border: 3px solid #f4f4f4; border-radius: 4px; }
.s-ring { background: repeating-radial-gradient(#555 0 1px, #222 2px 3px); box-shadow: 1px 1px #777; }
.s-grey { background: #a2a2a4; }
.s-fade { background: linear-gradient(100deg, #333, #ccc); }
.s-olive { background: #74603c; }
.s-gold { background: linear-gradient(#6b5228, #9a7c40); }
.s-pink { background: linear-gradient(#a01c38, #e86080 50%, #a01c38); }
.s-yellow { background: radial-gradient(#8f7a10 30%, #f3dc2a); }
.s-copper { background: linear-gradient(160deg, #b8603c, #e8a468 50%, #a86048); }
.s-sky { background: linear-gradient(#8fc0ea, #cfe8fa); border: 1px solid #8ab4dc; }
.s-chrome { background: linear-gradient(#4888c4, #eef 45%, #5a3c10 55%, #d8a050); }
.s-purple { background: linear-gradient(#7a5cc0, #5a4090); box-shadow: 2px 2px 0 #667; }
.s-steel { background: linear-gradient(140deg, #333 40%, #ccc 50%, #555 65%); }
.s-blue { background: linear-gradient(140deg, #1a60a8 40%, #8ccaf8 50%, #2878c8 65%); }
.scroll { width: 10px; display: flex; flex-direction: column; align-items: center; background: #f6f5f0; color: #3a568c; }
.scroll svg { width: 9px; height: 11px; background: #c3d3fb; border-radius: 1px; }
.scroll b { width: 9px; height: 9px; margin-top: 1px; background: #bccdf8; border: 1px solid #dfe8ff; }
.scroll b.long { height: 19px; }
.scroll .end { margin-top: auto; }
.scroll.off { color: #bbb; }
.scroll.off svg { background: #edebe3; }
.foot { display: flex; justify-content: flex-end; align-items: center; gap: 14px; height: 10px; flex: none; border-top: 1px solid #555; }
.foot svg { width: 9px; height: 9px; }
.foot.wide { gap: 12px; }
.foot .size { margin-left: -9px; }

.actions { height: 96px; }
.action-list { flex: 1; margin: 0; padding: 0; list-style: none; overflow: hidden; }
.action-list li { display: flex; height: 15px; }
.cell { width: 16px; display: flex; align-items: center; justify-content: center; border-right: 1px solid #b8b4a6; border-bottom: 1px solid #b8b4a6; }
.cell svg { width: 11px; height: 11px; }
.cell + .cell { border-right-color: #222; }
.entry { flex: 1; display: flex; align-items: center; gap: 4px; padding-left: 2px; }
.entry.child { margin-left: 11px; background: #fff; border-bottom: 1px solid #ddd; }
.fold { width: 12px; height: 10px; }

.layers { height: 149px; border-top-width: 1px; }
.layer-opts { display: flex; align-items: center; justify-content: space-between; height: 18px; padding: 0 4px 0 3px; color: #a5a193; border-bottom: 1px solid #cfcbbd; flex: none; }
.layer-opts .select { width: 58px; border-color: #cfccc0; background: #f2f0e6; }
.layer-opts .select svg { background: #f2f0e6; color: #bbb; }
.layer-opts label { display: flex; align-items: center; gap: 3px; }
.layer-opts button svg { width: 10px; height: 10px; }
.layer-opts button { color: #777; }
.pct { display: flex; align-items: center; width: 42px; height: 13px; border: 1px solid #cfccc0; }
.pct input { width: 32px; padding-left: 2px; }
.pct svg { width: 5px; height: 8px; }
.layer-list { flex: 1; }
.layer { display: flex; height: 20px; border-top: 1px solid #222; border-bottom: 1px solid #222; }
.layer-name { flex: 1; display: flex; align-items: center; gap: 3px; padding: 0 1px 0 2px; background: #316ac5; color: #fff; }
.layer-name i { width: 24px; height: 16px; background: #fff; border: 1px solid #7fc0d8; }
.layer-name svg { width: 9px; height: 9px; margin-left: auto; color: #112; }

.bubble { position: absolute; left: -20px; top: 360px; width: 34px; height: 34px; padding-right: 3px; border-radius: 17px; border: 1px solid #e2f2e2; background: radial-gradient(#5fd873, #3cb552); color: #fff; text-align: right; line-height: 32px; }

.status { display: flex; align-items: center; flex: none; height: 15px; background: #ece9d8; border-top: 1px solid #fff; font-family: "Noto Sans", "Noto Sans CJK SC", sans-serif; white-space: nowrap; }
.status input { width: 35px; height: 14px; padding-left: 4px; border: 1px solid #333; background: #fff; }
.doc-size { width: 9px; height: 9px; margin: 0 7px 0 5px; }
.measure { width: 160px; }
.status .i8 { margin-right: 6px; }

.taskbar { display: flex; align-items: center; flex: none; height: 22px; background: linear-gradient(#4a90f5, #2560dc 15%, #245edb 80%, #1a46ac); color: #fff; font-family: "Liberation Serif", "Noto Sans CJK SC", serif; }
.start { width: 71px; height: 22px; gap: 5px; padding-right: 8px; border-radius: 0 8px 8px 0; background: linear-gradient(#6fc06c, #37923a 20%, #359438 75%, #226a26); color: #fff; font: italic 14px/20px "Noto Sans CJK SC", sans-serif; text-shadow: 1px 1px 1px #234; }
.start svg { width: 15px; height: 14px; }
.quick { width: 28px; height: 22px; }
.quick svg { width: 12px; height: 12px; }
.tasks { display: flex; gap: 3px; flex: 1; }
.tasks button { flex: 0 1 115px; height: 18px; gap: 4px; justify-content: flex-start; padding-left: 7px; border-radius: 2px; background: linear-gradient(#5a9cff, #3c81f3 20%, #3a7cf0); color: #fff; }
.tasks .active { background: #1c4bb0; }
.tasks svg { width: 11px; height: 11px; }
.ime { width: 12px; height: 12px; margin-right: 8px; }
.tray { display: flex; align-items: center; gap: 1px; height: 22px; width: 82px; background: linear-gradient(#3fb4f8, #1592e8 20%, #1290e8 80%, #0e6cc0); }
.tray > svg { width: 12px; height: 12px; }
.chev { margin-left: -6px; }
.chev svg { width: 12px; height: 12px; }
.tray time { margin-left: 4px; font-size: 10px; }

.watermark { position: absolute; right: 55px; bottom: 21px; color: #fff; opacity: .8; pointer-events: none; white-space: nowrap; }
.mark { display: flex; align-items: flex-end; }
.mark svg { width: 54px; height: 58px; margin-left: 2px; }
.mark svg text { font: bold 23px "Liberation Sans", sans-serif; fill: #a8a6a4; }
.bai { font: bold 38px/38px "Liberation Sans", sans-serif; }
.jy { font: bold 30px/38px "Noto Sans CJK SC", sans-serif; }
.url { font: 20px/28px "Noto Sans", sans-serif; }
```
